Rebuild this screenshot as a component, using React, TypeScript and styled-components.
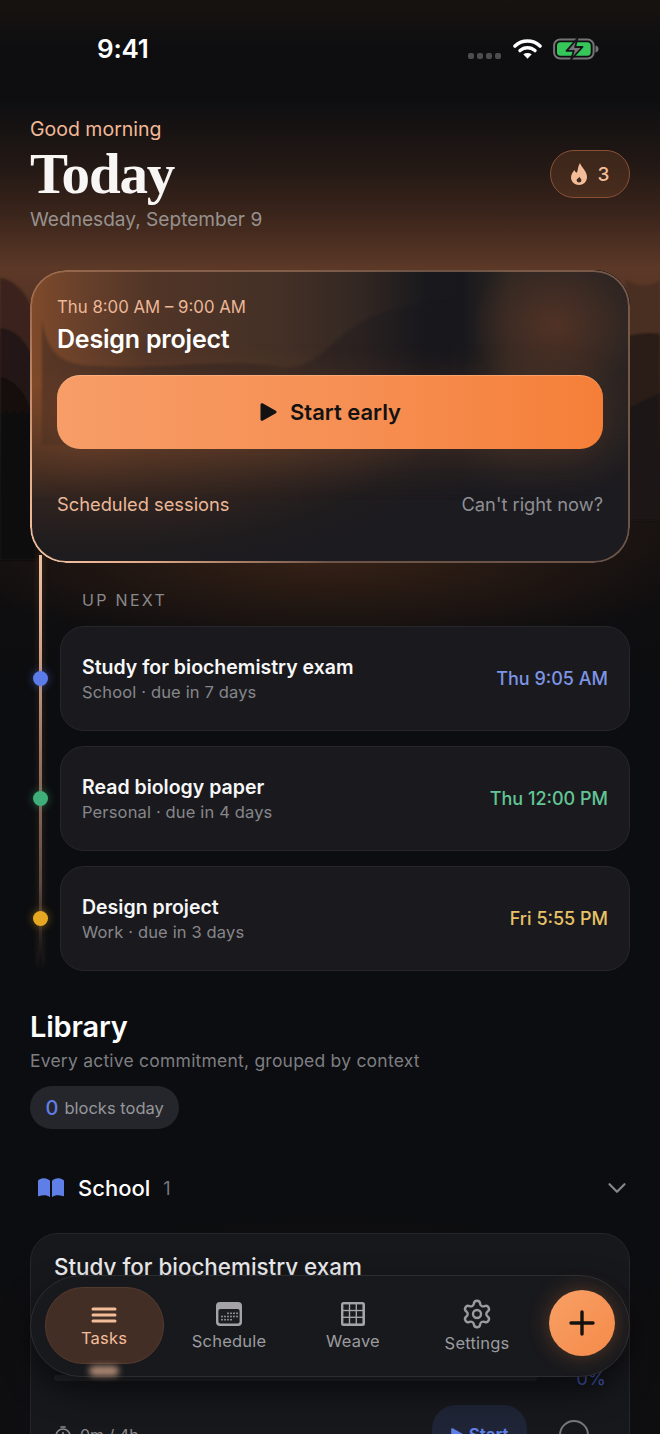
import React from "react";
import styled, { createGlobalStyle } from "styled-components";
import { ChevronDown, Settings } from "lucide-react";

const GlobalStyle = createGlobalStyle`
  html, body {
    margin: 0;
    padding: 0;
    background: #0c0d10;
  }
  * {
    box-sizing: border-box;
  }
`;

const Screen = styled.div`
  position: relative;
  width: 660px;
  height: 1434px;
  overflow: hidden;
  font-family: "Inter", "Liberation Sans", sans-serif;
  color: #fff;
  background: #0c0d10;
`;

const Backdrop = styled.div`
  position: absolute;
  top: 0;
  left: 0;
  width: 660px;
  height: 1434px;
  background:
    radial-gradient(ellipse 420px 170px at 330px 1370px, rgba(90, 50, 25, 0.14), transparent),
    radial-gradient(ellipse 380px 90px at 330px 560px, rgba(104, 58, 30, 0.42), transparent),
    linear-gradient(
      180deg,
      #17130f 0,
      #0e0e11 50px,
      #0e0e11 100px,
      #241915 170px,
      #3b251b 215px,
      #5c3827 268px,
      #4a2d20 360px,
      #1d1512 480px,
      #100e0f 570px,
      #0c0d10 700px
    );

  svg {
    display: block;
  }
`;

const Content = styled.div`
  position: relative;
`;

const StatusBar = styled.div`
  height: 94px;
  padding: 33px 61px 0 97px;
  display: flex;
  justify-content: space-between;
`;

const Clock = styled.div`
  font-size: 26px;
  line-height: 32px;
  font-weight: 600;
  letter-spacing: -0.2px;
`;

const StatusIcons = styled.div`
  display: flex;
  align-items: flex-start;
  padding-top: 5px;
  gap: 11px;
`;

const SignalDots = styled.div`
  display: flex;
  gap: 3px;
  margin: 15px 1px 0 0;
`;

const SignalDot = styled.span`
  width: 6px;
  height: 6px;
  border-radius: 2px;
  background: #4d4d50;
`;

const Header = styled.header`
  padding: 22px 30px 0;
  display: flex;
  align-items: center;
  justify-content: space-between;
`;

const Greeting = styled.div`
  font-size: 19.5px;
  line-height: 26px;
  color: #f1b996;
`;

const Title = styled.h1`
  margin: 1px 0 0;
  font-family: "Liberation Serif", serif;
  font-size: 57px;
  line-height: 61px;
  font-weight: 700;
  letter-spacing: -1.2px;
  color: #f7f6f5;
`;

const DateText = styled.div`
  margin-top: 2px;
  font-size: 19.1px;
  line-height: 26px;
  color: #96928f;
`;

const Streak = styled.div`
  width: 80px;
  height: 48px;
  border-radius: 24px;
  border: 1.5px solid #8a5034;
  background: rgba(130, 76, 44, 0.3);
  display: flex;
  align-items: center;
  justify-content: center;
  gap: 11px;
  font-size: 19px;
  font-weight: 500;
  color: #f4bd9a;
`;

const Hero = styled.section`
  position: relative;
  margin: 38px 30px 0;
  height: 293px;
  padding: 26px 27px 0;
  border-radius: 36px;
  overflow: hidden;
  background: #1b1b20;

  &::after {
    content: "";
    position: absolute;
    inset: 0;
    border-radius: 36px;
    padding: 2px;
    background: linear-gradient(
      40deg,
      #f4c4a4 0%,
      #e2ab8a 12%,
      rgba(190, 140, 110, 0.5) 32%,
      rgba(190, 140, 110, 0.5) 100%
    );
    -webkit-mask: linear-gradient(#000 0 0) content-box, linear-gradient(#000 0 0);
    -webkit-mask-composite: xor;
    mask-composite: exclude;
    pointer-events: none;
  }

  svg.waves {
    position: absolute;
    top: 0;
    left: 0;
  }
`;

const HeroInner = styled.div`
  position: relative;
`;

const HeroTime = styled.div`
  font-size: 16.8px;
  line-height: 22px;
  color: #ecb898;
`;

const HeroTitle = styled.div`
  margin-top: 5px;
  font-size: 25px;
  line-height: 32px;
  font-weight: 600;
  letter-spacing: -0.2px;
`;

const StartButton = styled.button`
  margin-top: 20px;
  width: 100%;
  height: 74px;
  border: none;
  border-radius: 23px;
  background: linear-gradient(90deg, #f79d67 0%, #f68f53 55%, #f57f38 100%);
  box-shadow: 0 10px 44px rgba(240, 130, 60, 0.16), inset 0 1px 0 rgba(255, 214, 180, 0.35);
  display: flex;
  align-items: center;
  justify-content: center;
  gap: 13px;
  font-family: inherit;
  font-size: 22px;
  font-weight: 600;
  color: #131212;
`;

const HeroFooter = styled.div`
  margin-top: 43px;
  display: flex;
  justify-content: space-between;
  font-size: 18.3px;
  line-height: 24px;
`;

const HeroLink = styled.span<{ $muted?: boolean }>`
  color: ${(p) => (p.$muted ? "#8f8f93" : "#ecb898")};
`;

const UpNext = styled.section`
  position: relative;
  padding: 27px 30px 0;
`;

const Rail = styled.div`
  position: absolute;
  left: 39px;
  top: -8px;
  width: 2.5px;
  height: 410px;
  background: linear-gradient(
    180deg,
    #efc0a0 0%,
    #dcab8d 18%,
    #a07a65 45%,
    #5f4a3f 80%,
    rgba(80, 60, 50, 0) 100%
  );
  box-shadow: 0 0 7px rgba(240, 170, 120, 0.22);
`;

const UpNextLabel = styled.div`
  position: relative;
  margin-left: 52px;
  font-size: 16px;
  line-height: 20px;
  letter-spacing: 2.3px;
  color: #8a898c;
`;

const Rows = styled.div`
  position: relative;
  margin-top: 16px;
  display: flex;
  flex-direction: column;
  gap: 15px;
`;

const TimelineRow = styled.div`
  display: grid;
  grid-template-columns: 20px 1fr;
  column-gap: 10px;
  align-items: center;
`;

const Dot = styled.span<{ $color: string }>`
  justify-self: center;
  width: 15px;
  height: 15px;
  border-radius: 50%;
  background: ${(p) => p.$color};
  box-shadow: 0 0 10px ${(p) => p.$color}77;
`;

const RowCard = styled.div`
  height: 105px;
  padding: 0 21px;
  border-radius: 24px;
  border: 1px solid #26262b;
  background: #1a1a1e;
  display: flex;
  align-items: center;
  justify-content: space-between;
`;

const RowTitle = styled.div`
  font-size: 19.5px;
  line-height: 26px;
  font-weight: 600;
  color: #f7f7f7;
`;

const RowMeta = styled.div`
  font-size: 16.5px;
  line-height: 24px;
  letter-spacing: 0.15px;
  color: #86868b;
`;

const RowTime = styled.div<{ $color: string }>`
  font-size: 18px;
  font-weight: 500;
  color: ${(p) => p.$color};
`;

const Library = styled.section`
  position: relative;
  padding: 38px 30px 0;
`;

const LibraryTitle = styled.h2`
  margin: 0;
  font-size: 29px;
  line-height: 36px;
  font-weight: 600;
  letter-spacing: -0.2px;
`;

const LibrarySub = styled.div`
  margin-top: 4px;
  font-size: 17.5px;
  line-height: 24px;
  letter-spacing: 0.22px;
  color: #7e7e82;
`;

const BlocksPill = styled.div`
  margin-top: 13px;
  display: flex;
  width: fit-content;
  align-items: center;
  gap: 6px;
  height: 43px;
  padding: 0 15.5px;
  border-radius: 22px;
  background: #25262b;
  font-size: 16.5px;
  color: #96969a;
`;

const BlocksCount = styled.span`
  font-size: 20px;
  font-weight: 500;
  color: #5f7fe6;
`;

const GroupHeader = styled.div`
  margin-top: 41px;
  height: 36px;
  padding: 0 0 0 8px;
  display: flex;
  align-items: center;
`;

const GroupName = styled.span`
  margin-left: 14px;
  font-size: 22px;
  font-weight: 500;
`;

const GroupCount = styled.span`
  margin-left: 13px;
  font-size: 18px;
  color: #77777b;
`;

const GroupChevron = styled.span`
  margin: 0 -2px 0 auto;
  display: flex;
  color: #85858a;
`;

const TaskCard = styled.div`
  margin-top: 27px;
  padding: 18px 23px 0;
  height: 260px;
  border-radius: 28px;
  border: 1px solid #25262b;
  background: #17181c;
`;

const TaskTitle = styled.div`
  font-size: 22.4px;
  line-height: 30px;
  font-weight: 500;
  color: #ececee;
`;

const ProgressRow = styled.div`
  margin-top: 84px;
  height: 24px;
  display: flex;
  align-items: center;
  gap: 39px;
`;

const Track = styled.div`
  width: 486px;
  height: 6px;
  border-radius: 3px;
  background: #26272b;
`;

const Percent = styled.span`
  font-size: 18.5px;
  color: #435cb8;
`;

const TaskFooter = styled.div`
  margin-top: 15px;
  display: flex;
  align-items: center;
  height: 60px;
`;

const Logged = styled.span`
  margin-left: 8px;
  font-size: 16px;
  color: #8a8a8e;
`;

const TaskStart = styled.div`
  margin-left: auto;
  width: 95px;
  height: 60px;
  border-radius: 24px;
  background: #1f2436;
  color: #5f7fe6;
  display: flex;
  align-items: center;
  justify-content: center;
  font-size: 17px;
  font-weight: 600;
`;

const TaskCheck = styled.span`
  margin: 0 17px 0 32px;
  width: 30px;
  height: 30px;
  border-radius: 50%;
  border: 2px solid #77777b;
`;

const BottomNav = styled.nav`
  position: absolute;
  left: 30px;
  top: 1275px;
  width: 600px;
  height: 102px;
  padding: 11px 14px 0 11px;
  border-radius: 51px;
  border: 1px solid #2c2d31;
  background: #18191d;
  box-shadow: 0 14px 30px rgba(0, 0, 0, 0.55);
  display: flex;
  align-items: flex-start;
`;

const Tab = styled.div<{ $active?: boolean; $gap: number }>`
  position: relative;
  flex: 0 0 ${(p) => (p.$active ? "119px" : "124px")};
  margin: ${(p) => (p.$active ? "0 3.5px 0 2.5px" : "0")};
  height: 77px;
  padding-top: 14px;
  border-radius: 38px;
  display: flex;
  flex-direction: column;
  align-items: center;
  gap: ${(p) => p.$gap}px;
  font-size: 16.5px;
  line-height: 20px;
  letter-spacing: 0.2px;
  color: ${(p) => (p.$active ? "#f4bd9a" : "#9b9b9f")};
  background: ${(p) => (p.$active ? "#432e26" : "transparent")};
  border: ${(p) => (p.$active ? "1px solid #553a2e" : "none")};
  ${(p) =>
    p.$active
      ? `
    &::after {
      content: "";
      position: absolute;
      left: 43px;
      bottom: -13px;
      width: 30px;
      height: 10px;
      border-radius: 5px;
      background: #b08a74;
      filter: blur(3px);
    }
  `
      : ""}
`;

const TabIcon = styled.div`
  height: 26px;
  display: flex;
  align-items: center;
  justify-content: center;
`;

const Fab = styled.button`
  margin: 3px 0 0 10px;
  flex: 0 0 66px;
  height: 66px;
  border: none;
  border-radius: 50%;
  background: linear-gradient(135deg, #f8a066, #f58a49);
  box-shadow: 0 0 22px rgba(240, 130, 60, 0.3);
  display: flex;
  align-items: center;
  justify-content: center;
`;

const PlayIcon = ({ size = 18, color = "#131212" }: { size?: number; color?: string }) => (
  <svg width={size} height={size} viewBox="0 0 18 18">
    <path
      d="M1.5 1.8C1.5.4 2.9-.2 4 .5l12.8 7.3c1 .6 1 1.9 0 2.4L4 17.5c-1.1.7-2.5.1-2.5-1.3z"
      fill={color}
    />
  </svg>
);

const WifiIcon = () => (
  <svg width="29" height="21" viewBox="0 0 29 21" fill="none">
    <path d="M2 8C9.2 1.4 19.8 1.4 27 8" stroke="#fff" strokeWidth="3.6" strokeLinecap="round" />
    <path d="M7 12.6c4.4-3.9 10.6-3.9 15 0" stroke="#fff" strokeWidth="3.4" strokeLinecap="round" />
    <path d="M14.5 20.8l-4.2-4.5c2.5-1.8 5.9-1.8 8.4 0z" fill="#fff" />
  </svg>
);

const BatteryIcon = () => (
  <svg width="46" height="22" viewBox="0 0 46 22" fill="none">
    <rect x="1.1" y="1.5" width="39.5" height="19" rx="6" stroke="#747477" strokeWidth="2" />
    <rect x="4" y="4.3" width="33.7" height="13.4" rx="3.5" fill="#35c759" />
    <path d="M42.5 7.5c2 .6 3 1.8 3 3.5s-1 2.9-3 3.5z" fill="#747477" />
    <path
      d="M24.5 0.5L13.5 12.8h7.3L18 21.5 29.5 9h-7.4z"
      fill="#77777a"
      stroke="#15161a"
      strokeWidth="1.8"
      strokeLinejoin="round"
    />
  </svg>
);

const FlameIcon = () => (
  <svg width="16" height="22" viewBox="0 0 16 22">
    <path
      fillRule="evenodd"
      d="M9 0c1 4 7 8 7 14 0 5-4 8-8 8s-8-3-8-7.5C0 11 2 9 3.5 7 4 9 5 9.5 6 9.5 7 6.5 7 3 9 0zM8 19.5c1.4 0 2.4-1 2.4-2.3 0-1.4-1.4-2-2-3.4-.7 1.4-2.8 2-2.8 3.5 0 1.2 1 2.2 2.4 2.2z"
      fill="#f4bd9a"
    />
  </svg>
);

const BookIcon = () => (
  <svg width="26" height="20" viewBox="0 0 26 20">
    <path
      d="M12 2.8v16.4c-1.6-1.3-3.6-1.9-6-1.9-1.7 0-3.3.3-5 .9-.6.2-1-.2-1-.7V3c0-.4.2-.7.5-.9C2.2.9 4 .3 6 .3c2.5 0 4.5.9 6 2.5zM14 2.8v16.4c1.6-1.3 3.6-1.9 6-1.9 1.7 0 3.3.3 5 .9.6.2 1-.2 1-.7V3c0-.4-.2-.7-.5-.9C23.8.9 22 .3 20 .3c-2.5 0-4.5.9-6 2.5z"
      fill="#5f7fe6"
    />
  </svg>
);

const MenuIcon = () => (
  <svg width="26" height="16" viewBox="0 0 26 16">
    <rect x="0.5" y="0.5" width="25" height="3" rx="1.5" fill="#f4bd9a" />
    <rect x="0.5" y="6.5" width="25" height="3" rx="1.5" fill="#f4bd9a" />
    <rect x="0.5" y="12.5" width="25" height="3" rx="1.5" fill="#f4bd9a" />
  </svg>
);

const CalendarIcon = () => {
  const dots: React.ReactNode[] = [];
  const rows = [
    [12, 15, 18, 21],
    [6, 9, 12, 15, 18, 21],
    [6, 9, 12, 15],
  ];
  rows.forEach((xs, r) =>
    xs.forEach((x) =>
      dots.push(<rect key={`${r}-${x}`} x={x - 0.8} y={10.5 + r * 3.2} width="1.6" height="1.6" fill="#a3a3a8" />)
    )
  );
  return (
    <svg width="26" height="24" viewBox="0 0 26 24">
      <rect width="26" height="24" rx="4" fill="#a3a3a8" />
      <rect x="2.4" y="7" width="21.2" height="14.6" rx="2" fill="#1c1d21" />
      {dots}
    </svg>
  );
};

const GridIcon = () => {
  const cells: React.ReactNode[] = [];
  for (let r = 0; r < 3; r++) {
    for (let c = 0; c < 3; c++) {
      cells.push(
        <rect key={`${r}-${c}`} x={2.4 + c * 6.8} y={2.4 + r * 6.8} width="5.4" height="5.4" fill="#1b1c20" />
      );
    }
  }
  return (
    <svg width="24" height="24" viewBox="0 0 24 24">
      <rect width="24" height="24" rx="2.5" fill="#a3a3a8" />
      {cells}
    </svg>
  );
};

const PlusIcon = () => (
  <svg width="26" height="26" viewBox="0 0 26 26" fill="none">
    <path d="M13 2v22M2 13h22" stroke="#14120f" strokeWidth="3.4" strokeLinecap="round" />
  </svg>
);

const ClockGlyph = () => (
  <svg width="18" height="18" viewBox="0 0 18 18" fill="none">
    <circle cx="9" cy="10" r="7" stroke="#8a8a8e" strokeWidth="1.6" />
    <path d="M9 6.5V10l2 1.5M7 1h4" stroke="#8a8a8e" strokeWidth="1.6" strokeLinecap="round" />
  </svg>
);

const BackdropHills = () => (
  <svg width="660" height="720" viewBox="0 0 660 720">
    <defs>
      <filter id="soft">
        <feGaussianBlur stdDeviation="0.8" />
      </filter>
      <linearGradient id="fadeLeft" x1="0" y1="0" x2="0" y2="1">
        <stop offset="0" stopColor="#130f0f" />
        <stop offset="0.6" stopColor="#0f0e10" />
        <stop offset="1" stopColor="#0f0e10" />
      </linearGradient>
    </defs>
    <g filter="url(#soft)">
      <path d="M0 278C12 280 24 288 34 312L40 500H0z" fill="#3b241a" />
      <path d="M0 328C14 330 26 338 34 362L40 500H0z" fill="#211713" />
      <path d="M0 377C14 380 26 390 34 420L36 560H0z" fill="url(#fadeLeft)" />
      <path d="M660 281C648 287 640 288 626 280L620 460H660z" fill="#4a2d20" />
      <path d="M660 334C650 332 640 333 626 336L620 460H660z" fill="#2c1d18" />
      <path d="M660 393C650 398 640 402 626 410L620 520H660z" fill="#1c1513" />
    </g>
  </svg>
);

const HeroWaves = () => (
  <svg className="waves" width="600" height="293" viewBox="0 0 600 293">
    <defs>
      <linearGradient id="heroTop" x1="0" y1="0" x2="1" y2="0">
        <stop offset="0" stopColor="#7f4a2a" />
        <stop offset="0.08" stopColor="#6a412b" />
        <stop offset="0.2" stopColor="#513527" />
        <stop offset="0.42" stopColor="#433026" />
        <stop offset="0.55" stopColor="#332723" />
        <stop offset="0.66" stopColor="#19191d" />
        <stop offset="0.72" stopColor="#18181c" />
        <stop offset="0.8" stopColor="#2e2622" />
        <stop offset="1" stopColor="#2b2422" />
      </linearGradient>
      <linearGradient id="heroFade" x1="0" y1="0" x2="0" y2="1">
        <stop offset="0" stopColor="#fff" />
        <stop offset="0.5" stopColor="#fff" />
        <stop offset="1" stopColor="#000" />
      </linearGradient>
      <mask id="heroMask">
        <rect width="600" height="230" fill="url(#heroFade)" />
      </mask>
      <radialGradient id="heroGlow" cx="0.5" cy="0.5" r="0.5">
        <stop offset="0" stopColor="#51322500" />
        <stop offset="0" stopColor="#513225" />
        <stop offset="1" stopColor="#513225" stopOpacity="0" />
      </radialGradient>
      <radialGradient id="heroLow" cx="0.12" cy="0.35" r="0.75">
        <stop offset="0" stopColor="#4a2f23" />
        <stop offset="0.45" stopColor="#3a2820" />
        <stop offset="0.8" stopColor="#1f1c1e" />
        <stop offset="1" stopColor="#1b1b20" />
      </radialGradient>
      <filter id="heroBlur">
        <feGaussianBlur stdDeviation="1.2" />
      </filter>
    </defs>
    <rect width="600" height="293" fill="url(#heroLow)" />
    <rect width="600" height="230" fill="url(#heroTop)" mask="url(#heroMask)" />
    <ellipse cx="525" cy="55" rx="85" ry="72" fill="url(#heroGlow)" />
    <path
      d="M12 50C18 85 32 96 70 96C130 100 200 88 250 97C290 100 295 72 335 50C365 36 395 34 420 32V175H12z"
      fill="#18181c"
      opacity="0.3"
      filter="url(#heroBlur)"
      mask="url(#heroMask)"
    />
  </svg>
);

const upNext = [
  { title: "Study for biochemistry exam", meta: "School · due in 7 days", time: "Thu 9:05 AM", dot: "#5b7be8", color: "#7d95e6" },
  { title: "Read biology paper", meta: "Personal · due in 4 days", time: "Thu 12:00 PM", dot: "#3fae78", color: "#62c595" },
  { title: "Design project", meta: "Work · due in 3 days", time: "Fri 5:55 PM", dot: "#e6a823", color: "#e8c266" },
];

function App() {
  return (
    <Screen>
      <GlobalStyle />
      <Backdrop>
        <BackdropHills />
      </Backdrop>
      <Content>
        <StatusBar>
          <Clock>9:41</Clock>
          <StatusIcons>
            <SignalDots>
              <SignalDot />
              <SignalDot />
              <SignalDot />
              <SignalDot />
            </SignalDots>
            <WifiIcon />
            <BatteryIcon />
          </StatusIcons>
        </StatusBar>

        <Header>
          <div>
            <Greeting>Good morning</Greeting>
            <Title>Today</Title>
            <DateText>Wednesday, September 9</DateText>
          </div>
          <Streak>
            <FlameIcon />
            3
          </Streak>
        </Header>

        <Hero>
          <HeroWaves />
          <HeroInner>
            <HeroTime>Thu 8:00 AM – 9:00 AM</HeroTime>
            <HeroTitle>Design project</HeroTitle>
            <StartButton>
              <PlayIcon />
              Start early
            </StartButton>
            <HeroFooter>
              <HeroLink>Scheduled sessions</HeroLink>
              <HeroLink $muted>Can't right now?</HeroLink>
            </HeroFooter>
          </HeroInner>
        </Hero>

        <UpNext>
          <Rail />
          <UpNextLabel>UP NEXT</UpNextLabel>
          <Rows>
            {upNext.map((item) => (
              <TimelineRow key={item.title}>
                <Dot $color={item.dot} />
                <RowCard>
                  <div>
                    <RowTitle>{item.title}</RowTitle>
                    <RowMeta>{item.meta}</RowMeta>
                  </div>
                  <RowTime $color={item.color}>{item.time}</RowTime>
                </RowCard>
              </TimelineRow>
            ))}
          </Rows>
        </UpNext>

        <Library>
          <LibraryTitle>Library</LibraryTitle>
          <LibrarySub>Every active commitment, grouped by context</LibrarySub>
          <BlocksPill>
            <BlocksCount>0</BlocksCount>
            blocks today
          </BlocksPill>
          <GroupHeader>
            <BookIcon />
            <GroupName>School</GroupName>
            <GroupCount>1</GroupCount>
            <GroupChevron>
              <ChevronDown size={30} strokeWidth={1.8} />
            </GroupChevron>
          </GroupHeader>
          <TaskCard>
            <TaskTitle>Study for biochemistry exam</TaskTitle>
            <ProgressRow>
              <Track />
              <Percent>0%</Percent>
            </ProgressRow>
            <TaskFooter>
              <ClockGlyph />
              <Logged>0m / 4h</Logged>
              <TaskStart>
                <PlayIcon size={14} color="#5f7fe6" />
                &nbsp;Start
              </TaskStart>
              <TaskCheck />
            </TaskFooter>
          </TaskCard>
        </Library>
      </Content>

      <BottomNav>
        <Tab $active $gap={0}>
          <TabIcon>
            <MenuIcon />
          </TabIcon>
          Tasks
        </Tab>
        <Tab $gap={4}>
          <TabIcon>
            <CalendarIcon />
          </TabIcon>
          Schedule
        </Tab>
        <Tab $gap={4}>
          <TabIcon>
            <GridIcon />
          </TabIcon>
          Weave
        </Tab>
        <Tab $gap={6}>
          <TabIcon>
            <Settings size={32} strokeWidth={1.8} />
          </TabIcon>
          Settings
        </Tab>
        <Fab>
          <PlusIcon />
        </Fab>
      </BottomNav>
    </Screen>
  );
}

export default App;
